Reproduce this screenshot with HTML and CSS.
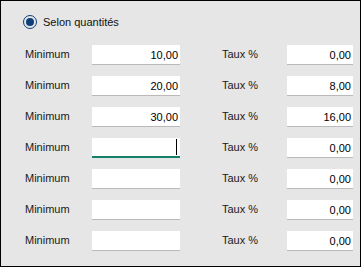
FILE: index.html
```html
<!DOCTYPE html>
<html lang="fr">
<head>
<meta charset="utf-8">
<title>Selon quantités</title>
<link rel="stylesheet" href="styles.css">
</head>
<body>
<div class="panel">
  <div class="radio-row">
    <span class="radio"><span class="radio-dot"></span></span>
    <span class="radio-label">Selon quantités</span>
  </div>
  <div class="grid">
    <span class="label">Minimum</span><div class="field">10,00</div><span></span><span class="label">Taux %</span><div class="field">0,00</div>
    <span class="label">Minimum</span><div class="field">20,00</div><span></span><span class="label">Taux %</span><div class="field">8,00</div>
    <span class="label">Minimum</span><div class="field">30,00</div><span></span><span class="label">Taux %</span><div class="field">16,00</div>
    <span class="label">Minimum</span><div class="field focused"><span class="caret"></span></div><span></span><span class="label">Taux %</span><div class="field">0,00</div>
    <span class="label">Minimum</span><div class="field"></div><span></span><span class="label">Taux %</span><div class="field">0,00</div>
    <span class="label">Minimum</span><div class="field"></div><span></span><span class="label">Taux %</span><div class="field">0,00</div>
    <span class="label">Minimum</span><div class="field"></div><span></span><span class="label">Taux %</span><div class="field">0,00</div>
  </div>
</div>
</body>
</html>
```
FILE: styles.css
```css
html, body {
  margin: 0;
  padding: 0;
  background: #e6e6e6;
}
.panel {
  width: 361px;
  height: 267px;
  box-sizing: border-box;
  border: 1px solid #000;
  background: #e6e6e6;
  padding: 11px 0 0 22px;
  font-family: "Liberation Sans", Arial, sans-serif;
  font-size: 11px;
  color: #1a1a1a;
}
.radio-row {
  display: flex;
  align-items: center;
  height: 20px;
  gap: 6px;
}
.radio {
  width: 14px;
  height: 14px;
  box-sizing: border-box;
  border: 1px solid #0d3f78;
  border-radius: 50%;
  display: flex;
  align-items: center;
  justify-content: center;
  background: #e6e6e6;
}
.radio-dot {
  width: 8px;
  height: 8px;
  border-radius: 50%;
  background: #0d3f78;
}
.radio-label {
  font-size: 11px;
  color: #111;
}
.grid {
  margin-top: 13px;
  margin-left: 2px;
  display: grid;
  grid-template-columns: 67px 88px 42px 65px 66px;
  grid-auto-rows: 20px;
  row-gap: 11px;
  align-items: center;
}
.label {
  line-height: 19px;
  align-self: start;
}
.field {
  height: 19px;
  box-sizing: content-box;
  background: #fff;
  border-bottom: 1px solid #b9b9b9;
  display: flex;
  align-items: center;
  justify-content: flex-end;
  padding-right: 2px;
  color: #000;
  align-self: start;
}
.field.focused {
  height: 18px;
  border-bottom: 2px solid #16806c;
  padding-right: 3px;
}
.caret {
  width: 1px;
  height: 16px;
  background: #000;
}
```
